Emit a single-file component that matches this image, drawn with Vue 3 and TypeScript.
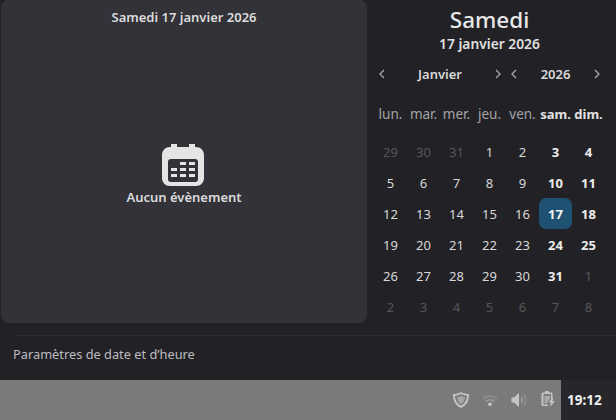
<template>
  <div class="screen">
    <div class="popup">
      <div class="main">
        <section class="events">
          <h2 class="events-date">Samedi 17 janvier 2026</h2>
          <div class="empty">
            <svg class="empty-icon" width="42" height="42" viewBox="0 0 42 42">
              <path
                fill="#e4e4e4"
                fill-rule="evenodd"
                d="M9 0h6v3h12V0h6v3h1c4.500 0 8 3.500 8 8v23c0 4.500-3.500 8-8 8H8c-4.500 0-8-3.500-8-8V11c0-4.500 3.500-8 8-8h1zM9 15c-2 0-3 1-3 3v17c0 2 1 3 3 3h24c2 0 3-1 3-3V18c0-2-1-3-3-3z"
              />
              <path
                fill="#e4e4e4"
                d="M18 18h6v3h-6zM27 18h6v3h-6zM9 24h6v3H9zM18 24h6v3h-6zM27 24h6v3h-6zM9 30h6v3H9zM18 30h6v3h-6zM27 30h6v3h-6z"
              />
            </svg>
            <p class="empty-label">Aucun évènement</p>
          </div>
        </section>

        <section class="calendar">
          <h1 class="day-name">Samedi</h1>
          <p class="full-date">17 janvier 2026</p>

          <div class="nav">
            <div v-for="item in navItems" :key="item.label" class="nav-group" :class="item.kind">
              <svg class="chevron" width="8" height="10" viewBox="0 0 8 10">
                <path d="M6 1 2 5l4 4" />
              </svg>
              <span class="nav-label">{{ item.label }}</span>
              <svg class="chevron" width="8" height="10" viewBox="0 0 8 10">
                <path d="m2 1 4 4-4 4" />
              </svg>
            </div>
          </div>

          <div class="weekdays">
            <span v-for="d in weekdays" :key="d.label" :class="{ weekend: d.weekend }">{{ d.label }}</span>
          </div>

          <div class="days">
            <span
              v-for="cell in cells"
              :key="cell.id"
              class="day"
              :class="{ muted: cell.muted, weekend: cell.weekend, today: cell.today }"
            >{{ cell.day }}</span>
          </div>
        </section>
      </div>

      <div class="footer">
        <div class="footer-inner">Paramètres de date et d’heure</div>
      </div>
    </div>

    <div class="taskbar">
      <div class="tray">
        <svg width="18" height="18" viewBox="0 0 18 18">
          <path
            fill="#c4c4c4"
            fill-rule="evenodd"
            d="M9 1c2.500 1.500 5 2 8 2 0 6-1.500 11-8 14C2.500 14 1 9 1 3c3 0 5.500-.5 8-2zm0 2C7.500 3.800 5.500 4.500 3 4.700c.2 4 1.500 7.500 6 10 4.500-2.500 5.800-6 6-10-2.500-.2-4.500-.9-6-1.700z"
          />
          <path fill="#c4c4c4" opacity=".6" d="M9 5c1.200.6 2.500 1 4 1.200-.2 3-1.300 5.300-4 7-2.700-1.700-3.800-4-4-7C6.500 6 7.800 5.600 9 5z" />
        </svg>
        <svg width="18" height="18" viewBox="0 0 18 18" fill="none" stroke="#a0a0a0">
          <path stroke-width="1.800" opacity=".55" d="M2 7.500C5.800 4.300 12.200 4.300 16 7.500" />
          <path stroke-width="1.800" opacity=".75" d="M4.800 10.500c2.400-2 6-2 8.400 0" />
          <circle cx="9" cy="13.300" r="1.800" fill="#c8c8c8" stroke="none" />
        </svg>
        <svg width="18" height="18" viewBox="0 0 18 18" fill="none">
          <path fill="#c4c4c4" d="M1.500 6.500H4L9 2v14l-5-4.500H1.500z" />
          <path stroke="#b4b4b4" stroke-width="1.600" opacity=".6" d="M11.500 6c1 1.800 1 4.200 0 6" />
          <path stroke="#a0a0a0" stroke-width="1.500" opacity=".5" d="M14 3.500c2 3.300 2 7.700 0 11" />
        </svg>
        <svg width="18" height="18" viewBox="0 0 18 18">
          <path
            fill="#c4c4c4"
            fill-rule="evenodd"
            d="M6 0h4v1.500h2c1 0 1.500.5 1.500 1.500v5H12V3H4.500v10.500H9V15H4c-1 0-1.500-.5-1.500-1.500V3C2.500 2 3 1.500 4 1.500h2z"
          />
          <path fill="#c4c4c4" opacity=".65" d="M5.500 5h5.500v2.500L8.500 11v1.500h-3z" />
          <path fill="#c4c4c4" d="M13 7 9.500 11.500H12L11 16l5-6h-2.800l1.300-3z" />
        </svg>
      </div>
      <div class="clock">19:12</div>
    </div>
  </div>
</template>

<script setup lang="ts">
interface Cell {
  id: string
  day: number
  muted: boolean
  weekend: boolean
  today: boolean
}

const navItems = [
  { label: 'Janvier', kind: 'month' },
  { label: '2026', kind: 'year' }
]

const weekdays = [
  { label: 'lun.', weekend: false },
  { label: 'mar.', weekend: false },
  { label: 'mer.', weekend: false },
  { label: 'jeu.', weekend: false },
  { label: 'ven.', weekend: false },
  { label: 'sam.', weekend: true },
  { label: 'dim.', weekend: true }
]

// janvier 2026 starts on a Thursday, the grid shows 6 full weeks
const buildCells = (): Cell[] => {
  const list: Cell[] = []
  const first = new Date(2025, 11, 29)
  for (let i = 0; i < 42; i++) {
    const d = new Date(first.getFullYear(), first.getMonth(), first.getDate() + i)
    const inMonth = d.getMonth() === 0 && d.getFullYear() === 2026
    list.push({
      id: `cell-${i}`,
      day: d.getDate(),
      muted: !inMonth,
      weekend: i % 7 >= 5,
      today: inMonth && d.getDate() === 17
    })
  }
  return list
}

const cells = buildCells()
</script>

<style scoped>
.screen {
  width: 616px;
  height: 420px;
  display: flex;
  flex-direction: column;
  overflow: hidden;
  font-family: "Noto Sans", "Open Sans", sans-serif;
  color: #e4e4e4;
}

.popup {
  height: 380px;
  display: flex;
  flex-direction: column;
  background: #222226;
}

.main {
  height: 323px;
  display: flex;
}

.events {
  width: 366px;
  margin-left: 1px;
  background: #323238;
  border-radius: 8px;
  display: flex;
  flex-direction: column;
  align-items: center;
}

.events-date {
  margin: 8px 0 0;
  font-size: 13px;
  line-height: 18px;
  font-weight: 600;
  color: #dcdcdc;
}

.empty {
  margin-top: 118px;
  display: flex;
  flex-direction: column;
  align-items: center;
}

.empty-icon {
  display: block;
  margin-right: 2px;
}

.empty-label {
  margin: 2px 0 0;
  font-size: 13px;
  line-height: 18px;
  font-weight: 600;
  color: #dcdcdc;
}

.calendar {
  width: 249px;
  display: flex;
  flex-direction: column;
  align-items: center;
}

.day-name {
  margin: 5px 4px 0 0;
  font-size: 22.500px;
  line-height: 29px;
  font-weight: 500;
  color: #e8e8e8;
}

.full-date {
  margin: 1px 4px 0 0;
  font-size: 13.800px;
  line-height: 18px;
  font-weight: 600;
  color: #e0e0e0;
}

.nav {
  margin-top: 11px;
  width: 100%;
  display: flex;
  padding-left: 11px;
  box-sizing: border-box;
  gap: 8px;
}

.nav-group {
  display: flex;
  align-items: center;
  justify-content: space-between;
  height: 20px;
}

.nav-group.month {
  width: 124px;
}

.nav-group.year {
  width: 91px;
}

.nav-label {
  font-size: 13px;
  font-weight: 600;
  color: #d8d8d8;
}

.chevron {
  fill: none;
  stroke: #a8a8a8;
  stroke-width: 1.300;
}

.weekdays,
.days {
  width: 100%;
  padding: 0 7px;
  box-sizing: border-box;
  display: grid;
  grid-template-columns: repeat(7, 33px);
}

.weekdays {
  margin-top: 20px;
  height: 20px;
  font-size: 13.500px;
  line-height: 20px;
  color: #a4a4a8;
  text-align: center;
  white-space: nowrap;
}

.weekdays .weekend {
  font-size: 13px;
  font-weight: 700;
  color: #e2e2e2;
}

.days {
  margin-top: 12px;
  grid-auto-rows: 31px;
}

.day {
  display: flex;
  align-items: center;
  justify-content: center;
  font-size: 13px;
  color: #d8d8d8;
  border-radius: 7px;
}

.day.weekend {
  font-weight: 700;
  color: #ececec;
}

.day.muted {
  font-weight: 400;
  color: #56565a;
}

.day.today {
  background: #1f5272;
  color: #f4f4f4;
  font-weight: 700;
}

.footer {
  flex: 1;
  padding: 12px 0 0 13px;
}

.footer-inner {
  border-top: 1px solid #2c2c30;
  padding-top: 9px;
  font-size: 12.800px;
  line-height: 18px;
  color: #bcbcc0;
}

.taskbar {
  height: 40px;
  display: flex;
  justify-content: flex-end;
  background: #7a7a7a;
}

.tray {
  display: flex;
  align-items: center;
  gap: 11px;
  padding-right: 4px;
}

.clock {
  width: 55px;
  padding-left: 6px;
  box-sizing: border-box;
  display: flex;
  align-items: center;
  background: #26262b;
  font-size: 13.500px;
  font-weight: 700;
  color: #f0f0f0;
}
</style>
<style>
html, body {
  margin: 0;
  background: #222226;
}
</style>
